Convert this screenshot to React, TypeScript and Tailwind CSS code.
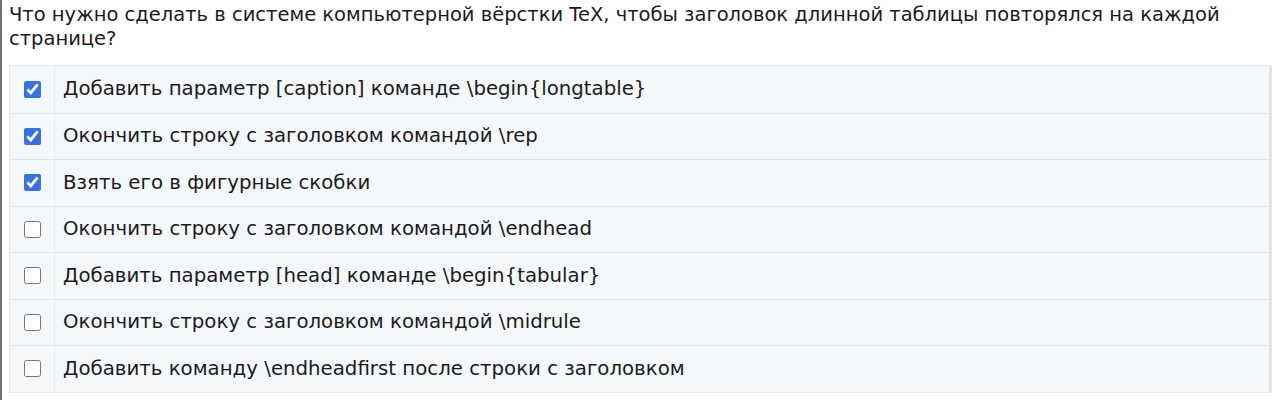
const options = [
  { text: "Добавить параметр [caption] команде \\begin{longtable}", checked: true },
  { text: "Окончить строку с заголовком командой \\rep", checked: true },
  { text: "Взять его в фигурные скобки", checked: true },
  { text: "Окончить строку с заголовком командой \\endhead", checked: false },
  { text: "Добавить параметр [head] команде \\begin{tabular}", checked: false },
  { text: "Окончить строку с заголовком командой \\midrule", checked: false },
  { text: "Добавить команду \\endheadfirst после строки с заголовком", checked: false },
];

export default function App() {
  return (
    <div
      className="h-[400px] bg-white border-l-2 border-[#707070] pl-[7px] pr-[6px] text-[#1b1b1b]"
      style={{ fontFamily: '"DejaVu Sans", Verdana, sans-serif' }}
    >
      <p className="text-[19.5px] leading-[24px] pt-[3px]">
        Что нужно сделать в системе компьютерной вёрстки TeX, чтобы заголовок длинной таблицы повторялся на каждой
        странице?
      </p>

      <div className="mt-[14px] border border-[#e6e9ec] border-r-[3px] border-r-[#e2e4e6]">
        {options.map((o, i) => (
          <div
            key={i}
            className={
              "flex h-[46.5px] bg-[#f5f8fb] " + (i > 0 ? "border-t border-[#e3e7ea]" : "")
            }
          >
            <div className="w-[45px] shrink-0 flex items-center justify-center border-r border-[#e8ebee]">
              <input
                type="checkbox"
                defaultChecked={o.checked}
                className="w-[17px] h-[17px] m-0 accent-[#3a72dc]"
              />
            </div>
            <div className="flex items-center pl-[8px] text-[19.75px]">{o.text}</div>
          </div>
        ))}
      </div>
    </div>
  );
}
